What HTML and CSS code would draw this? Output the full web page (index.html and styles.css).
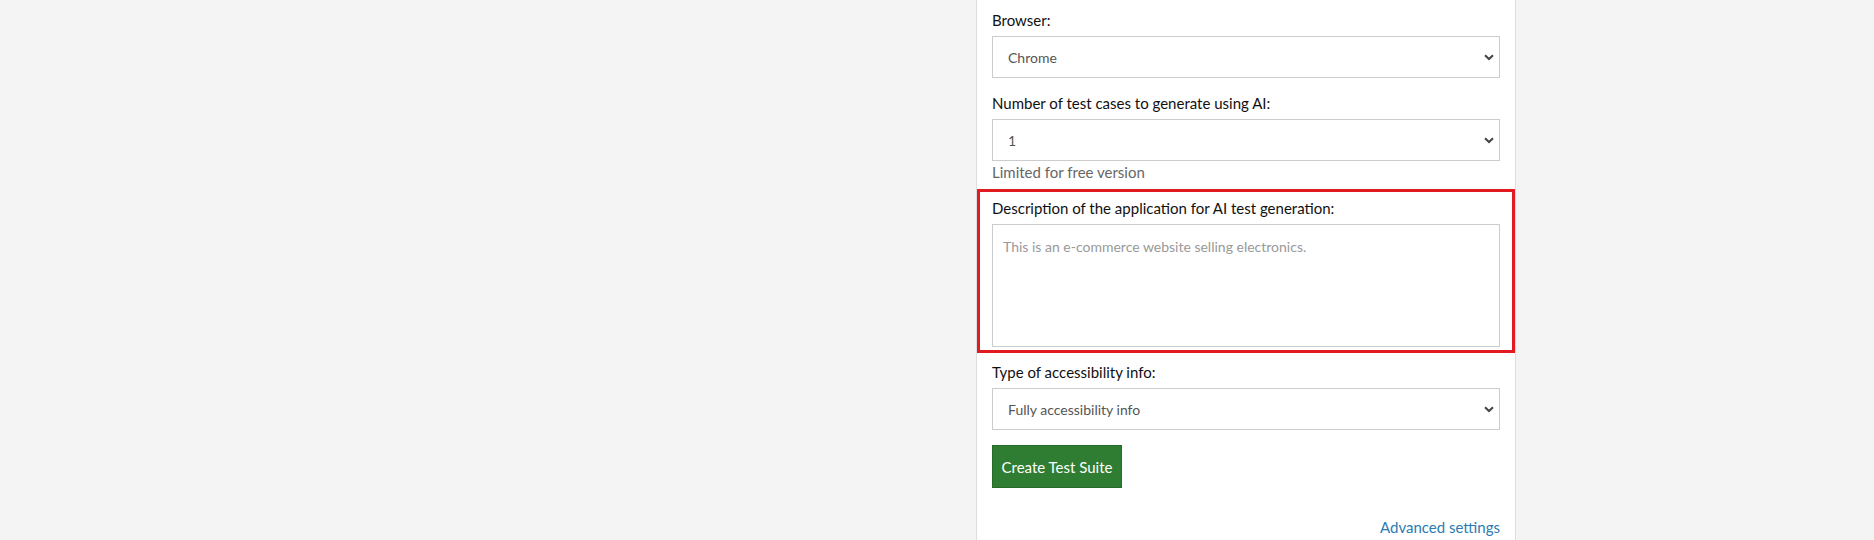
FILE: index.html
```html
<!DOCTYPE html>
<html lang="en">
<head>
<meta charset="utf-8">
<title>Create Test Suite</title>
<link rel="stylesheet" href="styles.css">
</head>
<body>
<div class="page">
  <div class="panel">
    <div class="group">
      <label class="label" for="browser">Browser:</label>
      <div class="select-wrap">
        <select id="browser" class="control select"><option>Chrome</option></select>
        <svg class="chev" viewBox="0 0 10 7" width="10" height="7"><path d="M1 1.2 L5 5 L9 1.2" fill="none" stroke="#444" stroke-width="2"/></svg>
      </div>
    </div>
    <div class="group">
      <label class="label" for="count">Number of test cases to generate using AI:</label>
      <div class="select-wrap">
        <select id="count" class="control select"><option>1</option></select>
        <svg class="chev" viewBox="0 0 10 7" width="10" height="7"><path d="M1 1.2 L5 5 L9 1.2" fill="none" stroke="#444" stroke-width="2"/></svg>
      </div>
      <div class="help">Limited for free version</div>
    </div>
    <div class="group highlight">
      <label class="label" for="desc">Description of the application for AI test generation:</label>
      <textarea id="desc" class="control textarea" placeholder="This is an e-commerce website selling electronics."></textarea>
    </div>
    <div class="group">
      <label class="label" for="acc">Type of accessibility info:</label>
      <div class="select-wrap">
        <select id="acc" class="control select"><option>Fully accessibility info</option></select>
        <svg class="chev" viewBox="0 0 10 7" width="10" height="7"><path d="M1 1.2 L5 5 L9 1.2" fill="none" stroke="#444" stroke-width="2"/></svg>
      </div>
    </div>
    <button class="btn" type="button">Create Test Suite</button>
    <div class="links"><a class="link" href="#">Advanced settings</a></div>
  </div>
</div>
</body>
</html>
```

FILE: styles.css
```css
* { box-sizing: border-box; }
html, body {
  margin: 0;
  padding: 0;
  background: #f4f4f4;
  font-family: Lato, "Open Sans", "Liberation Sans", sans-serif;
  height: 540px;
  overflow: hidden;
}
.page {
  display: flex;
  justify-content: flex-start;
  padding-left: 976px;
  height: 540px;
}
.panel {
  width: 540px;
  background: #fff;
  border-left: 1px solid #dedede;
  border-right: 1px solid #dedede;
  padding: 9px 15px 0 15px;
  display: flex;
  flex-direction: column;
}
.group {
  display: flex;
  flex-direction: column;
  margin-bottom: 14px;
}
.label {
  font-size: 15px;
  line-height: 22px;
  color: #111;
  margin-bottom: 5px;
}
.select-wrap {
  position: relative;
}
.control {
  width: 100%;
  border: 1px solid #ccc;
  background: #fff;
  font-family: Lato, "Open Sans", "Liberation Sans", sans-serif;
  font-size: 14px;
  color: #555;
  border-radius: 0;
  outline: none;
}
.select {
  height: 42px;
  appearance: none;
  -webkit-appearance: none;
  padding: 0 30px 0 15px;
}
.chev {
  position: absolute;
  right: 6px;
  top: 18px;
}
.help {
  font-size: 15px;
  line-height: 22px;
  color: #666;
}
.group:nth-child(2) { margin-bottom: 6px; }
.highlight {
  margin: 0 -15px 8px -15px;
  border: 3px solid #e21b23;
  padding: 5px 12px 3px 12px;
}
.textarea {
  height: 123px;
  resize: none;
  padding: 12px 10px;
  line-height: 20px;
  display: block;
}
.textarea::placeholder { color: #999; }
.btn {
  align-self: flex-start;
  width: 130px;
  height: 43px;
  margin-top: 1px;
  background: #2e7d32;
  border: 1px solid #276b2a;
  color: #fff;
  font-family: Lato, "Open Sans", "Liberation Sans", sans-serif;
  font-size: 15px;
  padding: 0;
  border-radius: 0;
}
.links {
  display: flex;
  justify-content: flex-end;
  margin-top: 28px;
}
.link {
  font-size: 15px;
  line-height: 22px;
  color: #2b7bb2;
  text-decoration: none;
}
```
